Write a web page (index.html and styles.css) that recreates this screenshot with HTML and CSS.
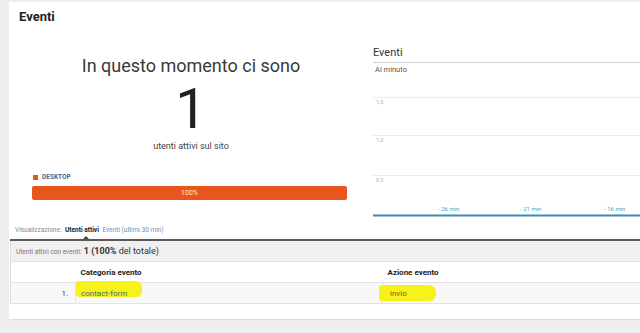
FILE: index.html
```html
<!DOCTYPE html>
<html lang="it">
<head>
  <meta charset="UTF-8" />
  <title>Eventi - In tempo reale</title>
  <link rel="stylesheet" href="styles.css">
</head>
<body>
  <div class="card">
    <h1 class="title">Eventi</h1>

    <div class="top">
      <!-- Utenti attivi -->
      <div class="now">
        <p class="now-label">In questo momento ci sono</p>
        <p class="now-count">1</p>
        <p class="now-sub">utenti attivi sul sito</p>
        <div class="device"><span class="swatch"></span>DESKTOP</div>
        <div class="bar">100%</div>
      </div>

      <!-- Grafico al minuto -->
      <div class="chart">
        <h2 class="chart-title">Eventi</h2>
        <p class="chart-sub">Al minuto</p>
        <svg class="plot" width="267" height="141" viewBox="0 0 267 141">
          <line x1="0" y1="21.5" x2="267" y2="21.5" stroke="#ececec" />
          <line x1="0" y1="59.5" x2="267" y2="59.5" stroke="#ececec" />
          <line x1="0" y1="99.5" x2="267" y2="99.5" stroke="#ececec" />
          <text x="3" y="28" class="tick">1,5</text>
          <text x="3" y="66" class="tick">1,0</text>
          <text x="3" y="106" class="tick">0,5</text>
          <text x="65" y="135" class="axis">- 26 min</text>
          <text x="147" y="135" class="axis">- 21 min</text>
          <text x="231" y="135" class="axis">- 16 min</text>
          <line x1="0" y1="139.5" x2="267" y2="139.5" stroke="#3c8ab7" stroke-width="2" />
        </svg>
      </div>
    </div>

    <div class="view">
      Visualizzazione:
      <span class="view-active">Utenti attivi</span>
      <span class="view-link">Eventi (ultimi 30 min)</span>
    </div>

    <table class="events">
      <tr class="summary">
        <td colspan="3"><span class="summary-label">Utenti attivi con eventi:</span> <b>1 (100%</b> del totale)</td>
      </tr>
      <tr class="head">
        <th class="idx"></th>
        <th class="cat">Categoria evento</th>
        <th>Azione evento</th>
      </tr>
      <tr class="row">
        <td class="idx">1.</td>
        <td class="cat"><span class="mark mark-a">contact-form</span></td>
        <td><span class="mark mark-b">invio</span></td>
      </tr>
    </table>
  </div>
</body>
</html>
```

FILE: styles.css
```css
body {
  margin: 0;
  padding-top: 2px;
  background: #eeeeee;
  font-family: Roboto, "Liberation Sans", sans-serif;
  color: #333;
}
p {
  margin: 0;
}
.card {
  margin-left: 9px;
  height: 318px;
  background: #fff;
  border-bottom: 1px solid #dddddd;
  box-sizing: border-box;
}
.title {
  margin: 0;
  padding: 7px 0 0 10px;
  font-size: 13px;
  font-weight: 700;
  line-height: 16px;
  color: #222;
}
.top {
  display: flex;
}
.now {
  width: 364px;
  padding-top: 30px;
  text-align: center;
}
.now-label {
  font-size: 18px;
  line-height: 22px;
  color: #3a3a3a;
}
.now-count {
  margin-top: 6px;
  font-size: 56px;
  line-height: 52px;
  color: #222;
}
.now-sub {
  margin-top: 5px;
  font-size: 9px;
  line-height: 12px;
  color: #444;
}
.device {
  margin: 21px 0 0 24px;
  display: flex;
  align-items: center;
  gap: 4px;
  font-size: 6.5px;
  font-weight: 700;
  color: #3d6a96;
  text-align: left;
  line-height: 9px;
}
.swatch {
  width: 5px;
  height: 5px;
  background: #e8561d;
}
.bar {
  margin: 4px 26px 0 23px;
  height: 14px;
  border-radius: 2px;
  background: #e8561d;
  color: #fde8de;
  font-size: 7px;
  line-height: 14px;
}
.chart {
  flex: 1;
  padding-top: 21px;
}
.chart-title {
  margin: 0;
  font-size: 11px;
  font-weight: 400;
  line-height: 14px;
  color: #333;
  border-bottom: 1px solid #cfcfcf;
  padding-bottom: 2px;
}
.chart-sub {
  margin-top: 2px;
  padding-left: 2px;
  font-size: 7.5px;
  line-height: 10px;
  color: #555;
}
.plot {
  display: block;
  margin-top: 1px;
}
.tick {
  font-size: 5.5px;
  fill: #b0b0b0;
  font-family: Roboto, "Liberation Sans", sans-serif;
}
.axis {
  font-size: 6px;
  fill: #5a9ac6;
  font-family: Roboto, "Liberation Sans", sans-serif;
}
.view {
  margin-top: 8px;
  padding-left: 6px;
  font-size: 6.5px;
  line-height: 10px;
  color: #8a8a8a;
}
.view-active {
  position: relative;
  color: #222;
  font-weight: 700;
  margin-left: 2px;
}
.view-active::after {
  content: "";
  position: absolute;
  left: 18px;
  bottom: -5px;
  border: 3px solid transparent;
  border-bottom-color: #444;
}
.view-link {
  color: #6d93ba;
  margin-left: 2px;
}
.events {
  margin: 4px 0 0 1px;
  width: calc(100% - 1px);
  border-collapse: collapse;
  border-top: 2px solid #5a5a5a;
  border-left: 1px solid #dedede;
  font-size: 8px;
}
.events td, .events th {
  padding: 0 0 0 5px;
  text-align: left;
  border-bottom: 1px solid #e2e2e2;
}
.summary td {
  height: 20px;
  background: #f0f0f0;
  font-size: 9px;
  color: #333;
}
.summary-label {
  font-size: 6.5px;
  color: #777;
}
.head th {
  height: 20px;
  font-weight: 700;
  color: #222;
}
.row td {
  height: 20px;
  background: #f8f8f8;
}
.events .idx {
  width: 57px;
  padding: 0 7px 0 0;
  text-align: right;
  color: #444;
}
.events .cat {
  width: 301px;
}
.row .cat, .row .cat + td {
  border-left: 1px solid #e6e6e6;
}
.mark {
  position: relative;
  z-index: 0;
  color: #3f6f92;
}
.mark::before {
  content: "";
  position: absolute;
  z-index: -1;
  background: #f6f21a;
}
.mark-a::before {
  left: -5px;
  right: -15px;
  top: -8px;
  bottom: 1px;
  border-radius: 2px 6px 5px 3px;
}
.mark-b {
  margin-left: 2px;
  color: #6b6b22;
}
.mark-b::before {
  left: -11px;
  right: -29px;
  top: -4px;
  bottom: -3px;
  border-radius: 3px 7px 6px 3px;
}
```
